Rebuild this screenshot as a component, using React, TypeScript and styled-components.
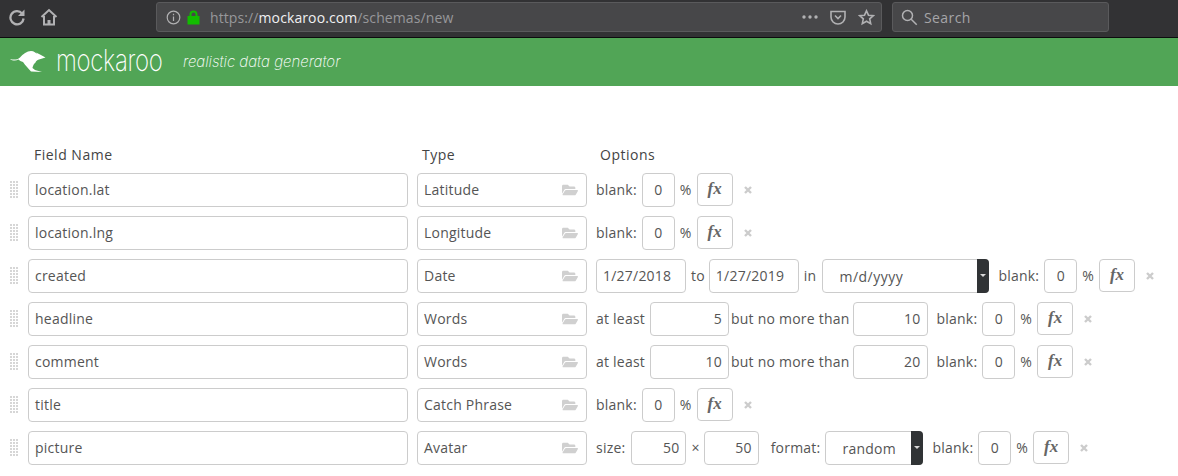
import React from "react";
import styled, { createGlobalStyle } from "styled-components";
import { FaFolderOpen } from "react-icons/fa";

const GlobalStyle = createGlobalStyle`
  html, body {
    margin: 0;
    height: 476px;
    overflow: hidden;
    background: #fff;
    font-family: "Open Sans", "Liberation Sans", sans-serif;
    font-size: 14px;
    letter-spacing: 0.22px;
    color: #555;
  }
`;

const Chrome = styled.div`
  height: 35px;
  background: #323234;
  border-bottom: 1px solid #0c0c0d;
  display: flex;
  align-items: flex-start;
  padding-top: 2px;
  color: #b1b1b3;
`;

const NavIcons = styled.div`
  width: 156px;
  height: 30px;
  padding-left: 8px;
  box-sizing: border-box;
  display: flex;
  gap: 14px;
  align-items: center;
`;

const ChromeBox = styled.div`
  height: 30px;
  box-sizing: border-box;
  background: #474749;
  border: 1px solid #5a5a5c;
  border-radius: 3px;
  display: flex;
  align-items: center;
`;

const UrlBar = styled(ChromeBox)`
  width: 726px;
  padding: 0 6px 0 9px;
  gap: 6px;
`;

const SearchBar = styled(ChromeBox)`
  width: 217px;
  margin-left: 10px;
  padding-left: 8px;
  gap: 6px;
  color: #a5a5a8;
  letter-spacing: 0.4px;
`;

const Url = styled.span`
  flex: 1;
  color: #97979a;
  margin-left: 4px;
  letter-spacing: 0.1px;
`;

const UrlHost = styled.span`
  color: #f0f0f2;
`;

const ToolIcon = styled.svg`
  margin-left: 6px;
`;

const Brand = styled.div`
  height: 48px;
  background: #51a556;
  color: #fff;
  display: flex;
  align-items: center;
  padding-left: 10px;
`;

const LogoName = styled.span`
  font-family: Inter, sans-serif;
  font-weight: 200;
  font-size: 30px;
  letter-spacing: -0.4px;
  margin: -4px 0 0 10px;
  display: inline-block;
  width: 127px;
  transform: scaleX(0.8);
  transform-origin: left center;
`;

const Tagline = styled.span`
  font-family: Inter, sans-serif;
  font-weight: 200;
  font-size: 15px;
  letter-spacing: 0;
  font-style: italic;
  margin-top: -1px;
`;

const Form = styled.div`
  padding: 60px 0 0 28px;
`;

const Heads = styled.div`
  display: flex;
  height: 18px;
  line-height: 18px;
  margin-bottom: 9px;
  color: #444;
  letter-spacing: 0.5px;
`;

const Head = styled.span<{ $w: number; $pad: number }>`
  width: ${(p) => p.$w}px;
  padding-left: ${(p) => p.$pad}px;
  box-sizing: border-box;
`;

const Row = styled.div`
  position: relative;
  display: flex;
  align-items: center;
  height: 34px;
  margin-bottom: 9px;
`;

const Grip = styled.i`
  position: absolute;
  left: -18px;
  top: 8px;
  width: 8px;
  height: 17px;
  background-image: conic-gradient(from 270deg at 2px 2px, #d6d6d6 25%, transparent 0);
  background-size: 3px 3px;
`;

const Field = styled.div`
  height: 34px;
  box-sizing: border-box;
  border: 1px solid #ccc;
  border-radius: 4px;
  display: flex;
  align-items: center;
  padding: 0 6px 2px;
  color: #555;
  background: #fff;
`;

const NameField = styled(Field)`
  width: 380px;
  margin-right: 9px;
`;

const TypeField = styled(Field)`
  width: 170px;
  margin-right: 9px;
  justify-content: space-between;
  svg {
    color: #d0d0d0;
    margin: 2px 2px 0 0;
  }
`;

const NumField = styled(Field)<{ $w: number; $left?: boolean; $center?: boolean }>`
  width: ${(p) => p.$w}px;
  justify-content: ${(p) =>
    p.$center ? "center" : p.$left ? "flex-start" : "flex-end"};
`;

const Label = styled.span<{ $l?: number; $r?: number }>`
  margin-left: ${(p) => p.$l ?? 0}px;
  margin-right: ${(p) => p.$r ?? 5}px;
  margin-bottom: 2px;
  white-space: nowrap;
`;

const Select = styled(Field)<{ $w: number; $pad: number; $track: number }>`
  width: ${(p) => p.$w}px;
  position: relative;
  padding: 0 0 0 ${(p) => p.$pad}px;
  letter-spacing: ${(p) => p.$track}px;
`;

const Handle = styled.span`
  position: absolute;
  right: -1px;
  top: -1px;
  bottom: -1px;
  width: 12px;
  background: #303335;
  border-radius: 0 4px 4px 0;
  &::after {
    content: "";
    position: absolute;
    left: 3px;
    top: 15px;
    border: 3px solid transparent;
    border-top: 3px solid #d8d8d8;
    border-bottom: 0;
  }
`;

const FxButton = styled.span`
  width: 36px;
  height: 33px;
  margin: 0 11px 1px 5px;
  padding-bottom: 2px;
  box-sizing: border-box;
  border: 1px solid #ccc;
  border-radius: 4px;
  display: flex;
  align-items: center;
  justify-content: center;
  font-family: "Liberation Serif", serif;
  font-style: italic;
  font-weight: bold;
  font-size: 17px;
  letter-spacing: 0;
  color: #666;
`;

const Remove = styled.svg`
  width: 8px;
  height: 8px;
  stroke: #ccc;
  stroke-width: 2.4;
`;

function Blank({ left = 0 }: { left?: number }) {
  return (
    <>
      <Label $l={left}>blank:</Label>
      <NumField $w={33} $center>0</NumField>
      <Label $l={5} $r={0}>%</Label>
      <FxButton>fx</FxButton>
      <Remove viewBox="0 0 8 8">
        <path d="M1 1l6 6M7 1l-6 6" />
      </Remove>
    </>
  );
}

function SchemaRow({ name, type, children }: { name: string; type: string; children: React.ReactNode }) {
  return (
    <Row>
      <Grip />
      <NameField>{name}</NameField>
      <TypeField>
        {type}
        <FaFolderOpen size={16} />
      </TypeField>
      {children}
    </Row>
  );
}

function Words({ min, max }: { min: number; max: number }) {
  return (
    <>
      <Label>at least</Label>
      <NumField $w={79}>{min}</NumField>
      <Label $l={2} $r={3}>but no more than</Label>
      <NumField $w={75}>{max}</NumField>
      <Blank left={9} />
    </>
  );
}

export default function App() {
  return (
    <>
      <GlobalStyle />
      <Chrome>
        <NavIcons>
          <svg width="18" height="18" viewBox="0 0 18 18" fill="none" stroke="currentColor" strokeWidth="2.3">
            <path d="M14.2 5.6A6.6 6.6 0 1 0 15.6 10.5" />
            <path d="M16.5 1.5V8H10z" fill="currentColor" stroke="none" />
          </svg>
          <svg width="18" height="18" viewBox="0 0 18 18" fill="none" stroke="currentColor" strokeWidth="2">
            <path d="M1.5 9L9 2l7.5 7" />
            <path d="M4 8v8.5h10V8" />
            <path d="M7.5 16.5V12h3v4.5" fill="currentColor" stroke="none" />
          </svg>
        </NavIcons>
        <UrlBar>
          <svg width="15" height="15" viewBox="0 0 15 15" fill="none" stroke="#b1b1b3" strokeWidth="1.2">
            <circle cx="7.5" cy="7.5" r="6.3" />
            <path d="M7.5 6.5v4.5M7.5 3.7v1.5" />
          </svg>
          <svg width="13" height="15" viewBox="0 0 13 15" fill="#12bc00">
            <path d="M2.5 6V4.5a4 4 0 0 1 8 0V6h2v8.500H.5V6zM4.5 6h4V4.500a2 2 0 0 0-4 0z" />
          </svg>
          <Url>
            https://<UrlHost>mockaroo.com</UrlHost>/schemas/new
          </Url>
          <svg width="16" height="4" viewBox="0 0 16 4" fill="#b1b1b3">
            <circle cx="2" cy="2" r="1.7" />
            <circle cx="8" cy="2" r="1.7" />
            <circle cx="14" cy="2" r="1.7" />
          </svg>
          <ToolIcon width="16" height="15" viewBox="0 0 16 15" fill="none" stroke="#b1b1b3" strokeWidth="1.6">
            <path d="M1 1.5h14V7a7 7 0 0 1-14 0z" />
            <path d="M5 5.5l3 3 3-3" />
          </ToolIcon>
          <ToolIcon width="17" height="17" viewBox="0 0 17 17" fill="none" stroke="#b1b1b3" strokeWidth="1.6">
            <path d="M8.5 1.8l2 4.4 4.800.5-3.600 3.200 1 4.800-4.200-2.500-4.200 2.500 1-4.800L1.700 6.700l4.800-.5z" />
          </ToolIcon>
        </UrlBar>
        <SearchBar>
          <svg width="17" height="17" viewBox="0 0 17 17" fill="none" stroke="#b1b1b3" strokeWidth="1.5">
            <circle cx="6.5" cy="6.5" r="5" />
            <path d="M10.2 10.2l5.5 5.500" />
          </svg>
          Search
        </SearchBar>
      </Chrome>
      <Brand>
        <svg width="36" height="22" viewBox="0 0 36 22" fill="#fff">
          <path d="M0 8C4 9 7 9 10 6.500 13 3 17 0 21 0 24 0 26 2 27.500 3.500L26 1.500 30 3.500 35.500 6.500 29 8.500C27 9 26 10 25.500 11.500L24 13C23 15 22.500 16 22.500 17L25 19 32 21 21 20.500C19 18 15 14 13 11 11 10.500 9.500 9.800 8.500 8.500 5.500 10.500 2 9.500 0 8Z" />
        </svg>
        <LogoName>mockaroo</LogoName>
        <Tagline>realistic data generator</Tagline>
      </Brand>
      <Form>
        <Heads>
          <Head $w={389} $pad={6}>Field Name</Head>
          <Head $w={179} $pad={5}>Type</Head>
          <Head $w={200} $pad={4}>Options</Head>
        </Heads>
        <SchemaRow name="location.lat" type="Latitude"><Blank /></SchemaRow>
        <SchemaRow name="location.lng" type="Longitude"><Blank /></SchemaRow>
        <SchemaRow name="created" type="Date">
          <NumField $w={90} $left>1/27/2018</NumField>
          <Label $l={5} $r={4}>to</Label>
          <NumField $w={90} $left>1/27/2019</NumField>
          <Label $l={5} $r={6}>in</Label>
          <Select $w={167} $pad={16} $track={0.5}>m/d/yyyy<Handle /></Select>
          <Blank left={9} />
        </SchemaRow>
        <SchemaRow name="headline" type="Words"><Words min={5} max={10} /></SchemaRow>
        <SchemaRow name="comment" type="Words"><Words min={10} max={20} /></SchemaRow>
        <SchemaRow name="title" type="Catch Phrase"><Blank /></SchemaRow>
        <SchemaRow name="picture" type="Avatar">
          <Label $r={6}>size:</Label>
          <NumField $w={55}>50</NumField>
          <Label $l={5} $r={4}>×</Label>
          <NumField $w={55}>50</NumField>
          <Label $l={12}>format:</Label>
          <Select $w={98} $pad={16} $track={0.25}>random<Handle /></Select>
          <Blank left={9} />
        </SchemaRow>
      </Form>
    </>
  );
}
